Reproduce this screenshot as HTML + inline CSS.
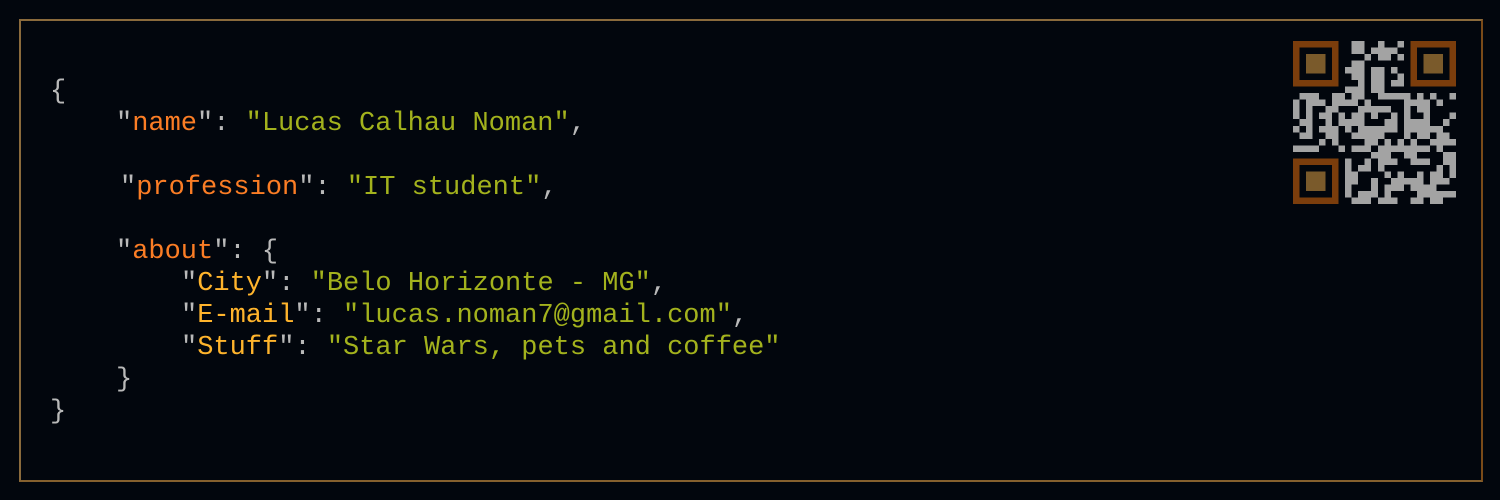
<!DOCTYPE html>
<html><head><meta charset="utf-8"><style>
html,body{margin:0;padding:0;background:#02060d;width:1500px;height:500px;overflow:hidden}
.box{position:absolute;left:19px;top:19px;width:1460px;height:459px;border:2px solid #8a6a3c;border-right-color:#7a4a18;border-bottom-color:#85602e}
.code{position:absolute;left:0;top:2px;font-family:"Liberation Mono",monospace;font-size:27px;color:#b9b9b9;white-space:pre}
.l{position:absolute;line-height:32px;height:32px}
.k{color:#fb7d25}.y{color:#ffb42c}.s{color:#a3b21d}
</style></head><body>
<div class="box"></div>
<div class="code">
<div class="l" style="left:50px;top:74px">{</div>
<div class="l" style="left:116px;top:106px">"<span class="k">name</span>": <span class="s">"Lucas Calhau Noman"</span>,</div>
<div class="l" style="left:120px;top:170px">"<span class="k">profession</span>": <span class="s">"IT student"</span>,</div>
<div class="l" style="left:116px;top:234px">"<span class="k">about</span>": {</div>
<div class="l" style="left:181px;top:266px">"<span class="y">City</span>": <span class="s">"Belo Horizonte - MG"</span>,</div>
<div class="l" style="left:181px;top:298px">"<span class="y">E-mail</span>": <span class="s">"lucas.noman7@gmail.com"</span>,</div>
<div class="l" style="left:181px;top:330px">"<span class="y">Stuff</span>": <span class="s">"Star Wars, pets and coffee"</span></div>
<div class="l" style="left:116px;top:362px">}</div>
<div class="l" style="left:50px;top:394px">}</div>
</div>
<svg id="qr" style="position:absolute;left:1293px;top:41px" width="163" height="163" viewBox="0 0 25 25" shape-rendering="crispEdges"></svg>
<script>
var s=document.getElementById('qr'),h='',seed=7;
function r(){seed=(seed*1103515245+12345)%2147483648;return seed/2147483648;}
function inF(x,y){return (x<8&&y<8)||(x>16&&y<8)||(x<8&&y>16);}
for(var y=0;y<25;y++)for(var x=0;x<25;x++){if(inF(x,y))continue;if(r()<0.55)h+='<rect x="'+x+'" y="'+y+'" width="1" height="1" fill="#a3a3a3"/>';}
[[0,0],[18,0],[0,18]].forEach(function(p){
h+='<rect x="'+(p[0]+0.5)+'" y="'+(p[1]+0.5)+'" width="6" height="6" fill="none" stroke="#7b3d0c" stroke-width="1"/>';
h+='<rect x="'+(p[0]+2)+'" y="'+(p[1]+2)+'" width="3" height="3" fill="#7a5a2b"/>';});
s.innerHTML=h;
</script>
</body></html>
